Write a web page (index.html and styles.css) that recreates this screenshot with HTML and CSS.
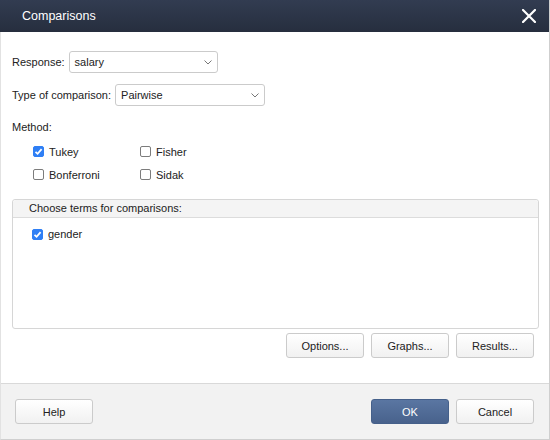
FILE: index.html
```html
<!DOCTYPE html>
<html>
<head>
<meta charset="utf-8">
<link rel="stylesheet" href="styles.css">
</head>
<body>
<div class="dialog">
  <div class="titlebar">
    <span class="title">Comparisons</span>
    <svg class="close" width="14" height="14" viewBox="0 0 14 14"><path d="M1 1 L13 13 M13 1 L1 13" stroke="#fff" stroke-width="2.2" stroke-linecap="square"/></svg>
  </div>
  <div class="content">
    <div class="field row-response">
      <span class="label">Response:</span>
      <div class="select sel-response"><span>salary</span><svg width="8" height="5" viewBox="0 0 8 5"><path d="M0.5 0.5 L4 4 L7.5 0.5" fill="none" stroke="#777" stroke-width="1"/></svg></div>
    </div>
    <div class="field row-type">
      <span class="label">Type of comparison:</span>
      <div class="select sel-type"><span>Pairwise</span><svg width="8" height="5" viewBox="0 0 8 5"><path d="M0.5 0.5 L4 4 L7.5 0.5" fill="none" stroke="#777" stroke-width="1"/></svg></div>
    </div>
    <div class="method-label">Method:</div>
    <div class="methods">
      <label class="check"><span class="box checked"><svg width="11" height="11" viewBox="0 0 11 11"><path d="M2.5 5.8 L4.6 7.8 L8.6 3.2" fill="none" stroke="#fff" stroke-width="1.8"/></svg></span>Tukey</label>
      <label class="check"><span class="box"></span>Fisher</label>
      <label class="check"><span class="box"></span>Bonferroni</label>
      <label class="check"><span class="box"></span>Sidak</label>
    </div>
    <div class="group">
      <div class="group-header">Choose terms for comparisons:</div>
      <div class="group-body">
        <label class="check"><span class="box checked"><svg width="11" height="11" viewBox="0 0 11 11"><path d="M2.5 5.8 L4.6 7.8 L8.6 3.2" fill="none" stroke="#fff" stroke-width="1.8"/></svg></span>gender</label>
      </div>
    </div>
    <div class="actions">
      <button class="btn">Options...</button>
      <button class="btn">Graphs...</button>
      <button class="btn">Results...</button>
    </div>
  </div>
  <div class="footer">
    <button class="btn">Help</button>
    <div class="spacer"></div>
    <button class="btn primary">OK</button>
    <button class="btn">Cancel</button>
  </div>
</div>
</body>
</html>
```
FILE: styles.css
```css
* { box-sizing: border-box; }
html, body { margin: 0; padding: 0; }
body {
  width: 550px;
  height: 440px;
  font-family: "Liberation Sans", Arial, sans-serif;
  font-size: 11px;
  color: #222;
  background: #fff;
}
.dialog {
  width: 550px;
  height: 440px;
  display: flex;
  flex-direction: column;
  border-right: 1px solid #cfcfcf;
  border-bottom: 1px solid #cfcfcf;
  border-left: 1px solid #e2e2e2;
}
.titlebar {
  height: 32px;
  flex: none;
  background: linear-gradient(#323c51, #262e3e);
  display: flex;
  align-items: center;
  padding: 0 13px 0 22px;
  margin-left: -1px;
}
.title {
  color: #fff;
  font-size: 12.5px;
  flex: 1;
}
.close { display: block; }
.content {
  flex: 1;
  padding: 19px 11px 0 11px;
  display: flex;
  flex-direction: column;
}
.field {
  display: flex;
  align-items: center;
  height: 22px;
}
.row-type { margin-top: 11px; }
.label { margin-right: 4px; }
.select {
  height: 22px;
  border: 1px solid #cbcbcb;
  border-radius: 3px;
  display: flex;
  align-items: center;
  justify-content: space-between;
  padding: 0 5px 0 5px;
  background: #fff;
}
.select svg { display: block; }
.sel-response { width: 149px; }
.sel-type { width: 150px; }
.method-label {
  margin-top: 14px;
  line-height: 14px;
}
.methods {
  display: grid;
  grid-template-columns: 107px 107px;
  grid-auto-rows: 23px;
  padding-left: 21px;
  margin-top: 6px;
  align-items: center;
}
.check {
  display: flex;
  align-items: center;
}
.box {
  width: 11px;
  height: 11px;
  border: 1px solid #7c7c7c;
  border-radius: 2px;
  background: #fff;
  margin-right: 5px;
  flex: none;
  position: relative;
}
.box.checked {
  background: #2f7ff5;
  border-color: #2f7ff5;
}
.box svg {
  position: absolute;
  left: -1px;
  top: -1px;
}
.group {
  margin-top: 13px;
  height: 130px;
  width: 527px;
  border: 1px solid #d6d6d6;
  border-radius: 3px;
  flex: none;
}
.group-header {
  height: 18px;
  background: #f4f4f4;
  border-bottom: 1px solid #dcdcdc;
  padding-left: 16px;
  line-height: 17px;
  border-radius: 3px 3px 0 0;
}
.group-body {
  padding: 10px 0 0 19px;
}
.actions {
  display: flex;
  justify-content: flex-end;
  gap: 7px;
  margin-top: 4px;
  padding-right: 4px;
}
.btn {
  font-family: "Liberation Sans", Arial, sans-serif;
  font-size: 11px;
  color: #222;
  width: 78px;
  height: 25px;
  border: 1px solid #cbcbcb;
  border-radius: 3px;
  background: linear-gradient(#ffffff, #f1f1f1);
  padding: 0;
}
.footer {
  height: 56px;
  flex: none;
  background: #f2f2f2;
  border-top: 1px solid #d9d9d9;
  display: flex;
  align-items: flex-start;
  padding: 15px 15px 0 14px;
  gap: 7px;
}
.spacer { flex: 1; }
.btn.primary {
  background: linear-gradient(#5a76a2, #48628c);
  border-color: #45608a;
  color: #fff;
}
```
